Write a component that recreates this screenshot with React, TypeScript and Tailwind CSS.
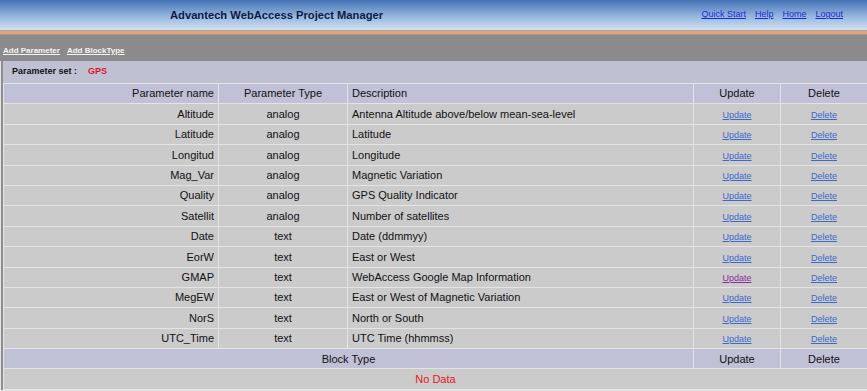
import React from "react";

type Param = { name: string; type: string; desc: string; visited?: boolean };

const params: Param[] = [
  { name: "Altitude", type: "analog", desc: "Antenna Altitude above/below mean-sea-level" },
  { name: "Latitude", type: "analog", desc: "Latitude" },
  { name: "Longitud", type: "analog", desc: "Longitude" },
  { name: "Mag_Var", type: "analog", desc: "Magnetic Variation" },
  { name: "Quality", type: "analog", desc: "GPS Quality Indicator" },
  { name: "Satellit", type: "analog", desc: "Number of satellites" },
  { name: "Date", type: "text", desc: "Date (ddmmyy)" },
  { name: "EorW", type: "text", desc: "East or West" },
  { name: "GMAP", type: "text", desc: "WebAccess Google Map Information", visited: true },
  { name: "MegEW", type: "text", desc: "East or West of Magnetic Variation" },
  { name: "NorS", type: "text", desc: "North or South" },
  { name: "UTC_Time", type: "text", desc: "UTC Time (hhmmss)" },
];

const headCell = "bg-[#c0c0d6] h-[19.4px] p-0 font-normal text-[11px] text-[#111]";
const rowCell = "bg-[#cbcbcb] h-[19.4px] p-0 text-[11px] text-[#111]";
const linkCls = "text-[9px] underline";

const App = () => {
  return (
    <div className="w-[867px] h-[391px] overflow-hidden bg-[#e4e4e4] font-['Liberation_Sans',Arial,sans-serif]">
      {/* top banner */}
      <div className="h-[31px] flex items-center bg-gradient-to-b from-[#4272b4] via-[#8fb1db] to-[#d3e2f2] border-b border-[#9aa8b8]">
        <div className="w-[170px]" />
        <div className="text-[11.2px] font-bold text-[#0e1a44]">Advantech WebAccess Project Manager</div>
        <div className="ml-auto mr-[24px] flex gap-[9px] text-[9px] text-[#1a2ad8]">
          <a href="#" className="underline">Quick Start</a>
          <a href="#" className="underline">Help</a>
          <a href="#" className="underline">Home</a>
          <a href="#" className="underline">Logout</a>
        </div>
      </div>
      <div className="h-[3px] bg-[#e8a272]" />
      {/* toolbar */}
      <div className="h-[27px] bg-[#8b8b8b] border-t border-[#9a9a9a] flex items-start pt-[10px] px-[3px] gap-[7px] text-[8px] font-bold text-[#f4f4f4]">
        <a href="#" className="underline">Add Parameter</a>
        <a href="#" className="underline">Add BlockType</a>
      </div>
      <div className="border-l-2 border-[#8e8e8e] ml-[1px]">
        <div className="h-[22px] bg-[#c0c0d3] flex items-center pl-[9px] text-[9px] font-bold">
          <span className="text-[#111]">Parameter set :</span>
          <span className="ml-[11px] text-[#e0142c]">GPS</span>
        </div>
        <table className="w-[863px] border-separate border-spacing-[1px] table-fixed">
          <colgroup>
            <col className="w-[214px]" />
            <col className="w-[128px]" />
            <col className="w-[345px]" />
            <col className="w-[86px]" />
            <col className="w-[86px]" />
          </colgroup>
          <thead>
            <tr>
              <th className={headCell + " text-right pr-[4px]"}>Parameter name</th>
              <th className={headCell + " text-center"}>Parameter Type</th>
              <th className={headCell + " text-left pl-[4px]"}>Description</th>
              <th className={headCell + " text-center"}>Update</th>
              <th className={headCell + " text-center"}>Delete</th>
            </tr>
          </thead>
          <tbody>
            {params.map((p) => (
              <tr key={p.name}>
                <td className={rowCell + " text-right pr-[4px]"}>{p.name}</td>
                <td className={rowCell + " text-center"}>{p.type}</td>
                <td className={rowCell + " text-left pl-[4px]"}>{p.desc}</td>
                <td className={rowCell + " text-center"}>
                  <a href="#" className={linkCls + (p.visited ? " text-[#8a2b9c]" : " text-[#3b69cc]")}>Update</a>
                </td>
                <td className={rowCell + " text-center"}>
                  <a href="#" className={linkCls + " text-[#3b69cc]"}>Delete</a>
                </td>
              </tr>
            ))}
            <tr>
              <td colSpan={3} className={headCell + " text-center"}>Block Type</td>
              <td className={headCell + " text-center"}>Update</td>
              <td className={headCell + " text-center"}>Delete</td>
            </tr>
            <tr>
              <td colSpan={5} className={rowCell + " text-center text-[#e8141e]"}>No Data</td>
            </tr>
          </tbody>
        </table>
      </div>
    </div>
  );
};

export default App;
